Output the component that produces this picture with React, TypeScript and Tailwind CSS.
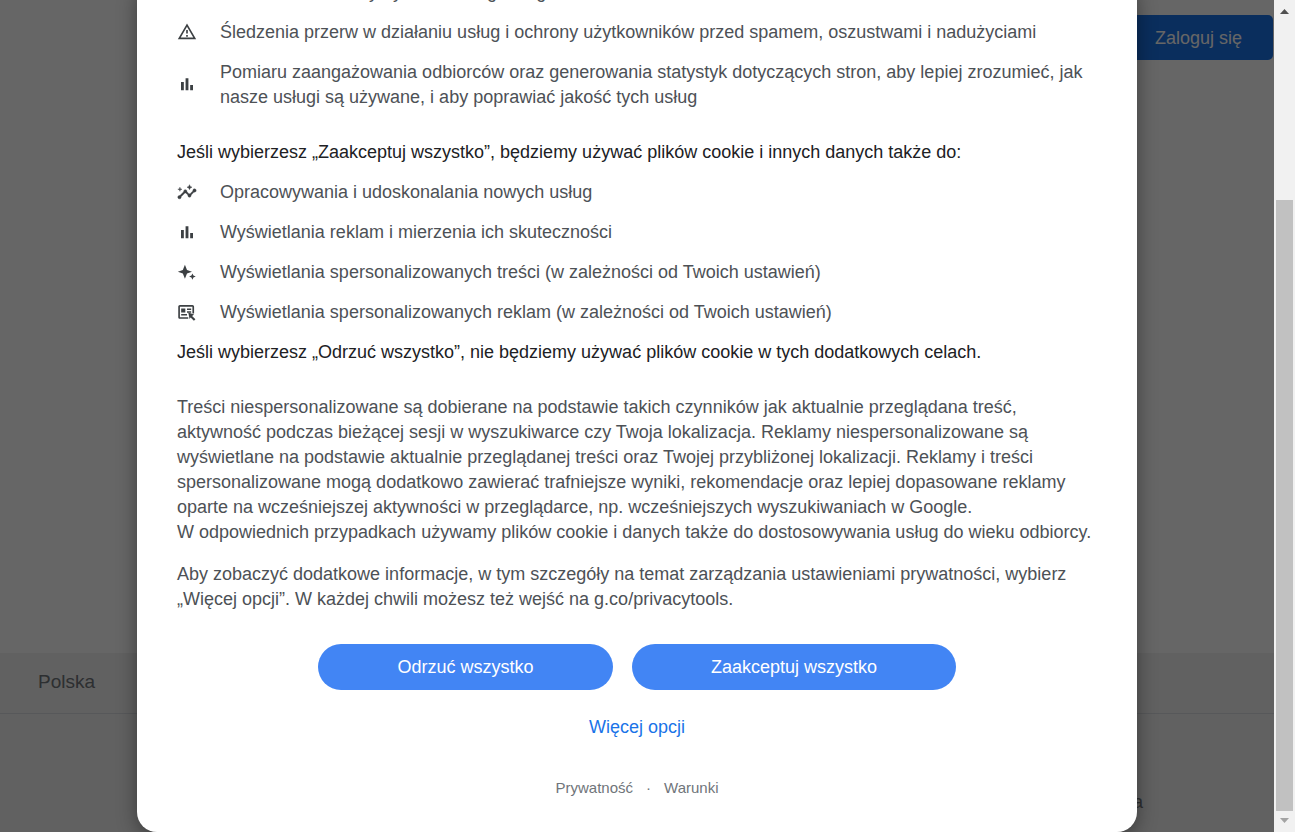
import type { ReactNode } from "react";

function Icon({ children }: { children: ReactNode }) {
  return (
    <svg viewBox="0 0 24 24" className="size-5 shrink-0 fill-[#3c4043]" aria-hidden="true">
      {children}
    </svg>
  );
}

const ServiceIcon = () => (
  <Icon>
    <path d="M5 4h14v2H5zM5 9h14v2H5z" />
  </Icon>
);

const WarningIcon = () => (
  <Icon>
    <path d="M12 4.49 19.53 17.500H4.470L12 4.490M12 .5 1 19.500h22L12 .5zm1 14h-2v2h2v-2zm0-6h-2v4h2v-4z" />
  </Icon>
);

const BarsIcon = () => (
  <Icon>
    <path d="M4.800 8.500h3.400v9.800H4.800zM10.300 3.800h3.400v14.500h-3.400zM15.800 12h3.400v6.300h-3.400z" />
  </Icon>
);

const InsightsIcon = () => (
  <Icon>
    <g transform="translate(0 -1)" stroke="#3c4043" strokeWidth="0.5">
      <path d="M21 8c-1.45 0-2.26 1.44-1.93 2.51l-3.55 3.56c-.3-.09-.74-.09-1.04 0l-2.55-2.55C12.27 10.45 11.46 9 10 9c-1.45 0-2.27 1.44-1.93 2.52l-4.56 4.55C2.44 15.74 1 16.55 1 18c0 1.1.9 2 2 2 1.45 0 2.26-1.44 1.93-2.51l4.55-4.56c.3.09.74.09 1.04 0l2.55 2.55C12.73 16.55 13.54 18 15 18c1.45 0 2.27-1.44 1.93-2.52l3.56-3.55c1.07.33 2.51-.48 2.51-1.93 0-1.1-.9-2-2-2z" />
      <path d="m15 9 .94-2.07L18 6l-2.06-.93L15 3l-.92 2.07L12 6l2.08.93zM3.5 11 4 9l2-.5L4 8l-.5-2L3 8l-2 .5L3 9z" />
    </g>
  </Icon>
);

const SparkIcon = () => (
  <Icon>
    <path d="M9.500 2 12 8.300 18 10.500 12 12.700 9.500 19 7 12.700 1 10.500 7 8.300z" />
    <path d="m18.500 12.500 1.200 2.500 2.800 1.200-2.800 1.200-1.200 2.800-1.200-2.800-2.800-1.200 2.800-1.200z" />
  </Icon>
);

const AdIcon = () => (
  <Icon>
    <path d="M3.500 2.500h15c1.100 0 2 .9 2 2v8h-2v-8h-15v12.500h10v2h-10c-1.100 0-2-.9-2-2V4.500c0-1.100.9-2 2-2z" />
    <path d="M5 6.500H10v5H5zM12 6.500h5v1.800H12zM12 9.800h5v1.800H12zM5 13.300H12v1.800H5z" />
    <path d="m13.500 11.500 7 2.400-2.400 1.600 4 4-1.800 1.800-4-4-1.200 2z" />
  </Icon>
);

function Row({ icon, children }: { icon: ReactNode; children: ReactNode }) {
  return (
    <li className="flex items-center gap-[23px]">
      {icon}
      <span>{children}</span>
    </li>
  );
}

function Background() {
  return (
    <div className="flex h-full flex-col bg-white">
      <header className="flex justify-end pt-[15px] pr-px">
        <button className="h-[45px] w-[149px] rounded-[5px] bg-[#1a73e8] text-lg text-white">Zaloguj się</button>
      </header>
      <footer className="mt-auto bg-[#f2f2f2] text-[#70757a]">
        <div className="flex h-[61px] items-center border-b border-[#dadce0] px-[38px] pb-px text-[19px]">Polska</div>
        <div className="flex h-[118px] items-center justify-end px-[131px] pt-[58px] text-lg">
          <a href="#ustawienia">Ustawienia</a>
        </div>
      </footer>
    </div>
  );
}

function ConsentDialog() {
  return (
    <section
      role="dialog"
      aria-label="Pliki cookie"
      className="w-[1000px] max-w-full shrink-0 rounded-[20px] bg-white px-10 pb-8 text-lg leading-[25px] text-[#4d5156] shadow-[0_5px_20px_rgba(0,0,0,0.4)]"
    >
      <ul className="flex flex-col gap-[15px]">
        <Row icon={<ServiceIcon />}>Dostarczania i utrzymywania usług Google</Row>
        <Row icon={<WarningIcon />}>
          Śledzenia przerw w działaniu usług i ochrony użytkowników przed spamem, oszustwami i nadużyciami
        </Row>
        <Row icon={<BarsIcon />}>
          Pomiaru zaangażowania odbiorców oraz generowania statystyk dotyczących stron, aby lepiej zrozumieć, jak
          nasze usługi są używane, i aby poprawiać jakość tych usług
        </Row>
      </ul>
      <p className="mt-[30px] text-[#202124]">
        Jeśli wybierzesz „Zaakceptuj wszystko”, będziemy używać plików cookie i innych danych także do:
      </p>
      <ul className="my-[15px] flex flex-col gap-[15px]">
        <Row icon={<InsightsIcon />}>Opracowywania i udoskonalania nowych usług</Row>
        <Row icon={<BarsIcon />}>Wyświetlania reklam i mierzenia ich skuteczności</Row>
        <Row icon={<SparkIcon />}>Wyświetlania spersonalizowanych treści (w zależności od Twoich ustawień)</Row>
        <Row icon={<AdIcon />}>Wyświetlania spersonalizowanych reklam (w zależności od Twoich ustawień)</Row>
      </ul>
      <p className="text-[#202124]">
        Jeśli wybierzesz „Odrzuć wszystko”, nie będziemy używać plików cookie w tych dodatkowych celach.
      </p>
      <p className="mt-[30px]">
        Treści niespersonalizowane są dobierane na podstawie takich czynników jak aktualnie przeglądana treść,
        aktywność podczas bieżącej sesji w wyszukiwarce czy Twoja lokalizacja. Reklamy niespersonalizowane są
        wyświetlane na podstawie aktualnie przeglądanej treści oraz Twojej przybliżonej lokalizacji. Reklamy i treści
        spersonalizowane mogą dodatkowo zawierać trafniejsze wyniki, rekomendacje oraz lepiej dopasowane reklamy
        oparte na wcześniejszej aktywności w przeglądarce, np. wcześniejszych wyszukiwaniach w Google.
        <br />
        W odpowiednich przypadkach używamy plików cookie i danych także do dostosowywania usług do wieku odbiorcy.
      </p>
      <p className="mt-[17px]">
        Aby zobaczyć dodatkowe informacje, w tym szczegóły na temat zarządzania ustawieniami prywatności, wybierz
        „Więcej opcji”. W każdej chwili możesz też wejść na g.co/privacytools.
      </p>
      <div className="mt-8 flex justify-center gap-[19px] text-white">
        <button className="h-[46px] w-[295px] rounded-full bg-[#4285f4]">Odrzuć wszystko</button>
        <button className="h-[46px] w-[324px] rounded-full bg-[#4285f4]">Zaakceptuj wszystko</button>
      </div>
      <div className="mt-[25px] text-center">
        <a href="#opcje" className="text-[#1a73e8]">Więcej opcji</a>
      </div>
      <div className="mt-[35px] flex justify-center gap-[13px] text-[15px] text-[#70757a]">
        <a href="#prywatnosc">Prywatność</a>
        <span>·</span>
        <a href="#warunki">Warunki</a>
      </div>
    </section>
  );
}

function Scrollbar() {
  return (
    <div className="flex w-[21px] shrink-0 flex-col items-center bg-[#f1f1f1]" aria-hidden="true">
      <svg viewBox="0 0 21 21" className="size-[21px] shrink-0 fill-[#505050]">
        <path d="M6 14 10.500 9 15 14z" />
      </svg>
      <div className="w-[17px] grow-[179]" />
      <div className="w-[17px] grow-[611] bg-[#c1c1c1]" />
      <svg viewBox="0 0 21 21" className="size-[21px] shrink-0 fill-[#a3a3a3]">
        <path d="M6 7 10.500 12 15 7z" />
      </svg>
    </div>
  );
}

export default function App() {
  return (
    <div className="flex h-screen overflow-hidden font-['Liberation_Sans',Arial,sans-serif]">
      <main className="relative min-w-0 grow">
        <Background />
        <div className="absolute inset-0 flex items-end justify-center overflow-hidden bg-black/60">
          <ConsentDialog />
        </div>
      </main>
      <Scrollbar />
    </div>
  );
}
